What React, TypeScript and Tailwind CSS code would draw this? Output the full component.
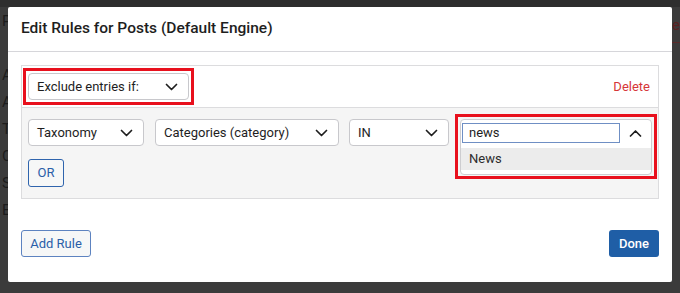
import type { ReactNode } from "react";

const font = { fontFamily: "Roboto, 'Noto Sans', sans-serif" };

function Chevron({ up = false }: { up?: boolean }) {
    return (
        <svg width="13" height="8" viewBox="0 0 13 8" fill="none" className="shrink-0">
            <path
                d={up ? "M1.5 7 6.5 2l5 5" : "M1.5 1.5l5 5 5-5"}
                stroke="#1e1e1e"
                strokeWidth="1.7"
                strokeLinecap="round"
                strokeLinejoin="round"
            />
        </svg>
    );
}

function Select({ label, className }: { label: string; className: string }) {
    return (
        <div
            className={`flex h-[27px] items-center justify-between rounded-[4px] border border-[#c8c8cc] bg-white pl-[8px] pr-[10px] text-[13px] text-[#1e1e1e] ${className}`}
        >
            <span>{label}</span>
            <Chevron />
        </div>
    );
}

// red annotation frame drawn over the screenshot
function Callout({ children, bottom = "-5px" }: { children: ReactNode; bottom?: string }) {
    return (
        <div className="relative">
            {children}
            <span
                className="pointer-events-none absolute left-[-5px] right-[-5px] top-[-5px] border-[3px] border-[#e8101d]"
                style={{ bottom }}
            />
        </div>
    );
}

export default function App() {
    const ghost = ["P", "", "A", "A", "T", "C", "S", "E"];

    return (
        <div className="relative h-[293px] w-[680px] overflow-hidden bg-[#3b3b3b]" style={font}>
            {/* page underneath the overlay */}
            <div className="h-[7px] bg-[#2e2e2e]" />
            <div className="flex flex-col pl-[2px] text-[15px] leading-[28px] text-[#1c1c1c]">
                {ghost.map((l, i) => (
                    <span key={i} className="h-[27px]">
                        {l}
                    </span>
                ))}
            </div>
            <div className="absolute right-0 top-[7px] h-[36px] w-[8px] border-b border-[#5a2a2a] text-[15px] leading-[36px] text-[#5a2020]">
                e
            </div>

            <div className="absolute left-[8px] top-[7px] flex h-[275px] w-[664px] flex-col rounded-[2px] bg-white">
                <div className="flex h-[45px] shrink-0 items-center border-b border-[#d6d6da] px-[13px]">
                    <h1 className="text-[15.5px] font-medium text-[#1e1e1e]">
                        Edit Rules for Posts (Default Engine)
                    </h1>
                </div>

                <div className="flex flex-1 flex-col px-[13px] pt-[13px]">
                    <div className="border border-[#dcdcde]">
                        <div className="flex h-[41px] items-center justify-between bg-white pl-[6px] pr-[8px]">
                            <Callout>
                                <Select label="Exclude entries if:" className="w-[161px]" />
                            </Callout>
                            <span className="text-[13px] text-[#d63638]">Delete</span>
                        </div>

                        <div className="flex flex-col gap-[13px] border-t border-[#dcdcde] bg-[#f5f5f5] px-[6px] pb-[11px] pt-[11px]">
                            <div className="flex items-start gap-[11px]">
                                <Select label="Taxonomy" className="w-[116px]" />
                                <Select label="Categories (category)" className="w-[184px]" />
                                <Select label="IN" className="ml-[-1px] w-[100px]" />
                                <div className="relative h-[27px] flex-1">
                                    <div className="absolute inset-x-0 top-0 z-10">
                                        <Callout bottom="-4px">
                                            <div className="flex flex-col rounded-[4px] border border-[#cdcdd0] bg-white">
                                                <div className="flex items-center gap-[9px] pl-[1px] pr-[9px] pt-[3px]">
                                                    <div className="flex h-[20px] flex-1 items-center border border-[#6f8fc4] bg-white pl-[6px] text-[13px] text-[#1e1e1e]">
                                                        news
                                                    </div>
                                                    <Chevron up />
                                                </div>
                                                <div className="mb-[4px] mt-[5px] flex h-[22px] items-center bg-[#ececec] pl-[8px] text-[13px] text-[#2c2c2c]">
                                                    News
                                                </div>
                                            </div>
                                        </Callout>
                                    </div>
                                </div>
                            </div>
                            <button className="flex h-[28px] w-[36px] items-center justify-center rounded-[3px] border border-[#2f64ad] bg-[#f6f7f7] text-[13px] text-[#2a5ea8]">
                                OR
                            </button>
                        </div>
                    </div>

                    <div className="mt-[31px] flex items-center justify-between">
                        <button className="flex h-[27px] w-[70px] items-center justify-center rounded-[3px] border border-[#5d83c0] bg-[#f6f7f7] text-[13px] text-[#2a5ea8]">
                            Add Rule
                        </button>
                        <button className="flex h-[27px] w-[50px] items-center justify-center rounded-[3px] bg-[#1f5ea6] text-[13px] font-medium text-white">
                            Done
                        </button>
                    </div>
                </div>
            </div>
        </div>
    );
}
